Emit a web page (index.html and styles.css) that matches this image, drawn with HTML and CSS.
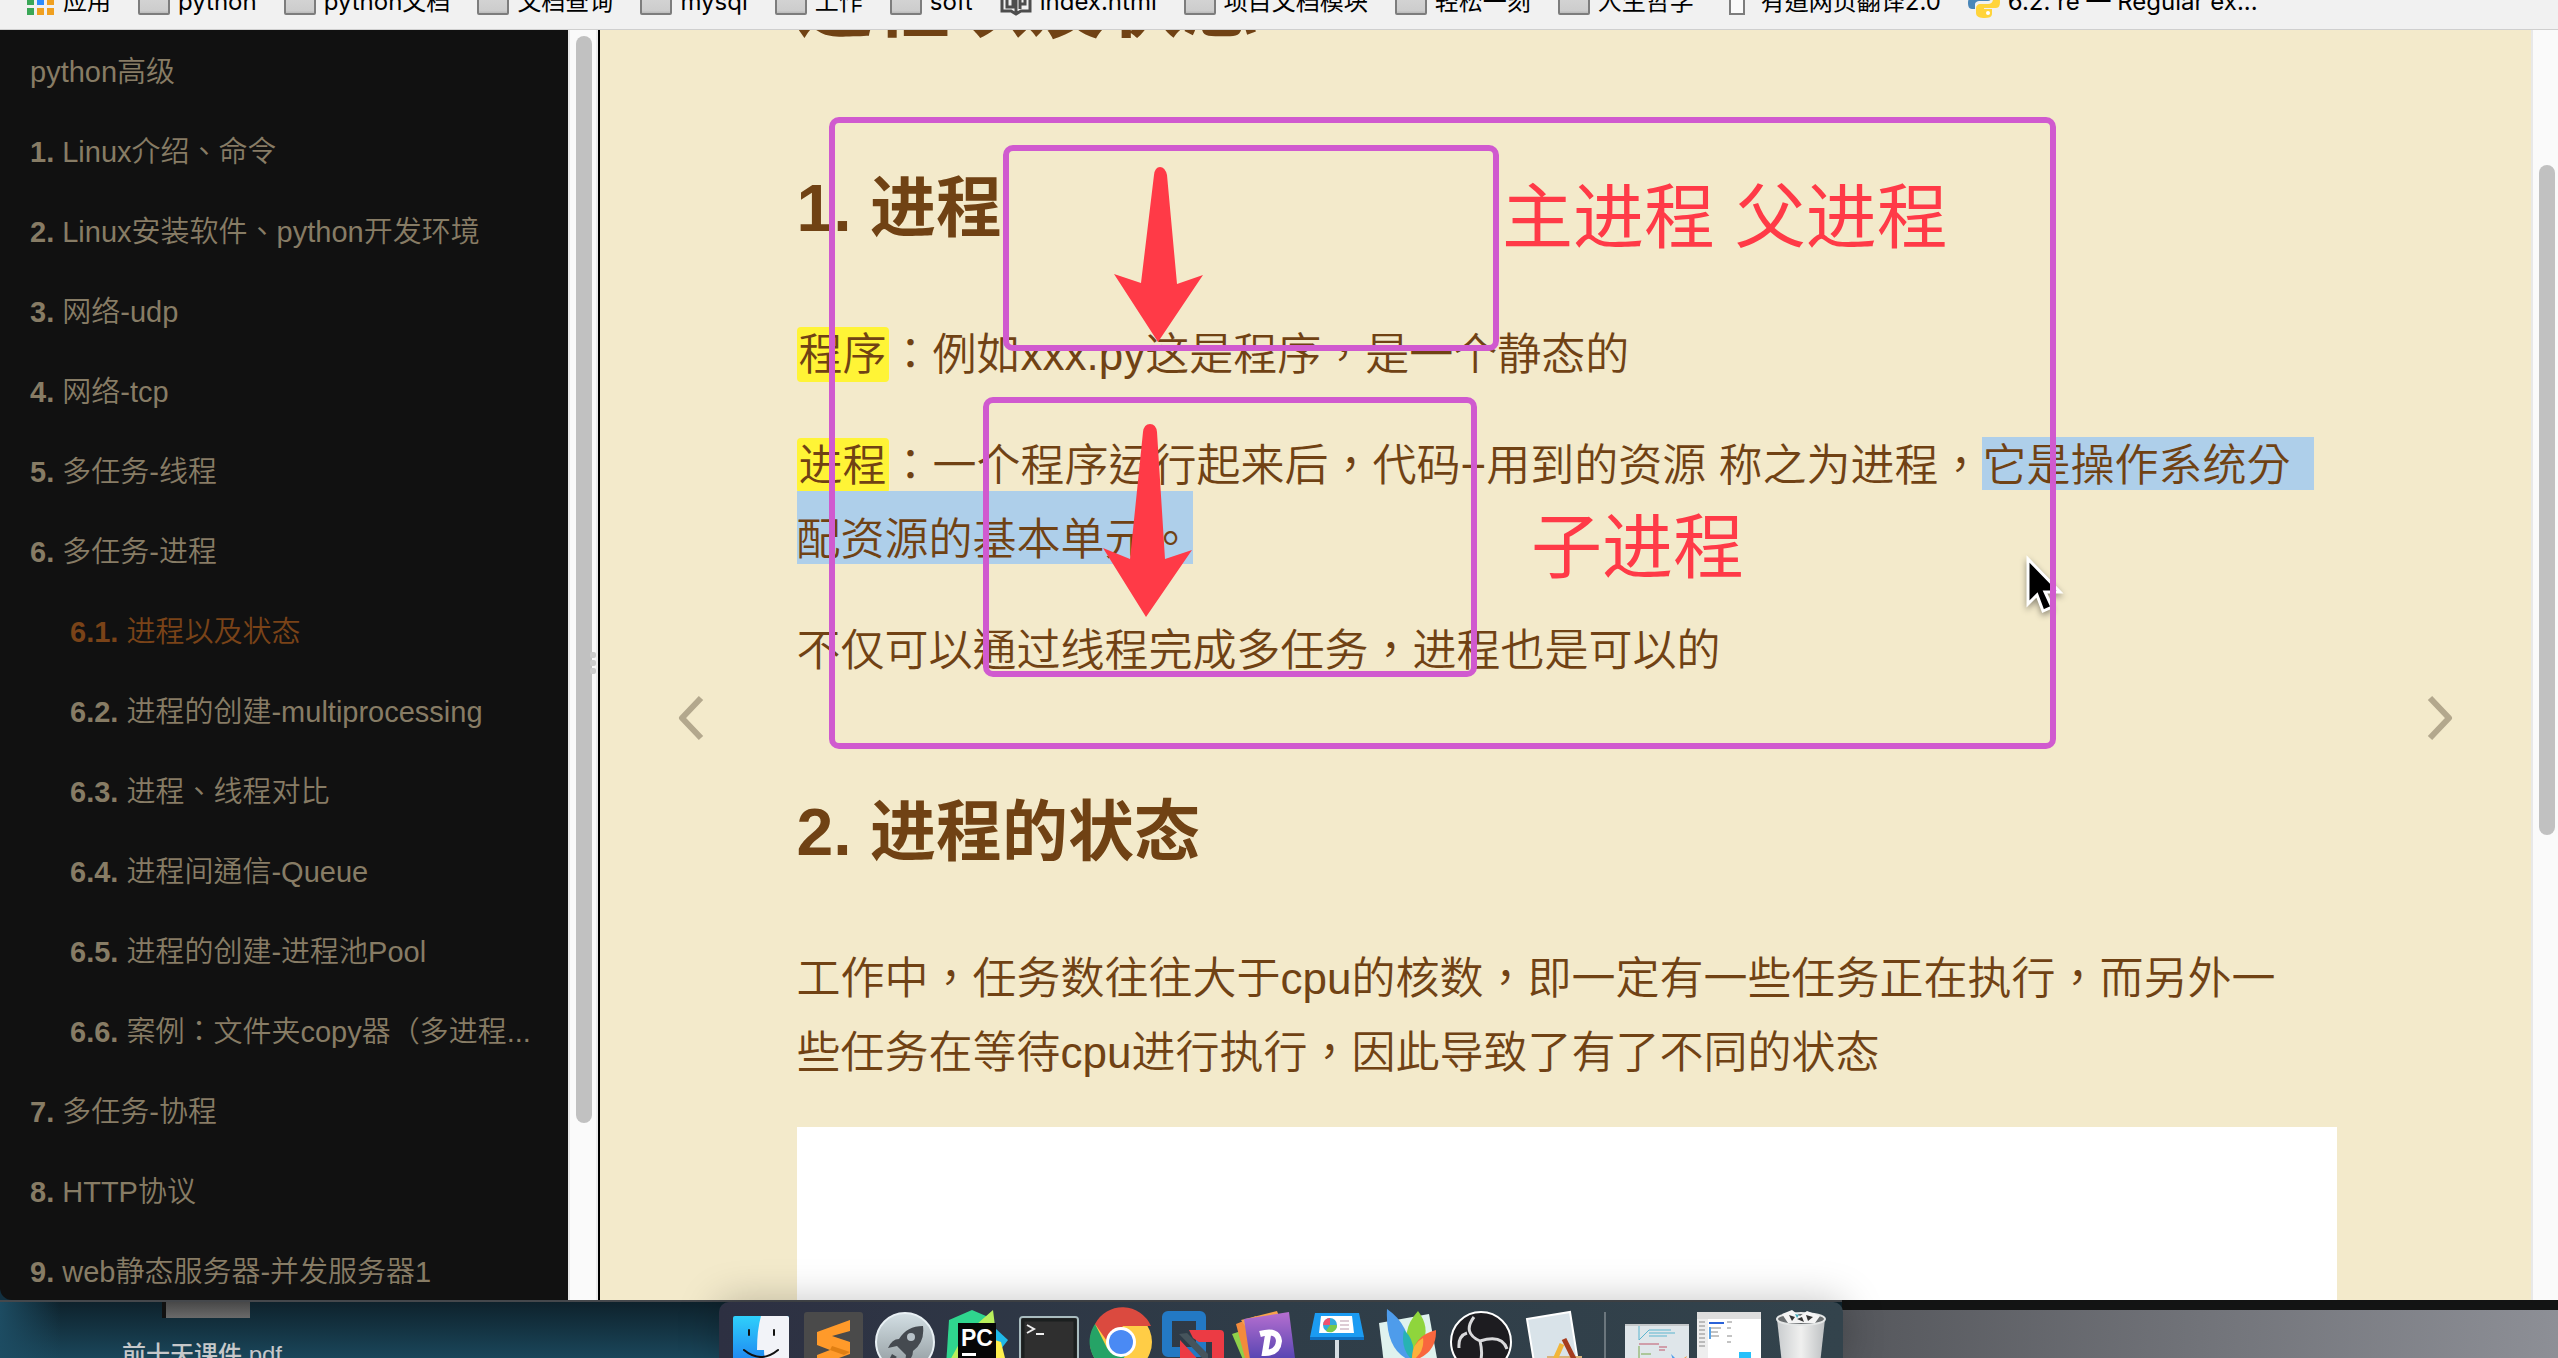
FILE: index.html
```html
<!DOCTYPE html>
<html lang="zh-Hant">
<head>
<meta charset="utf-8">
<title>进程以及状态</title>
<link rel="stylesheet" href="styles.css">
</head>
<body>
<svg class="defs" width="0" height="0" aria-hidden="true">
  <defs>
    <linearGradient id="folderFill" x1="0" y1="0" x2="0" y2="1"><stop offset="0" stop-color="#d8d8d8"/><stop offset=".85" stop-color="#cdcdcd"/><stop offset="1" stop-color="#b4b4b4"/></linearGradient>
    <symbol id="folder" viewBox="0 0 32 26"><rect x="1" y="1" width="30" height="24" rx="1" fill="url(#folderFill)" stroke="#7d7d7d" stroke-width="2"/></symbol>
  </defs>
</svg>
<div class="window">
  <nav class="bookmarks" aria-label="书签">
    <a href="#"><svg class="ico" width="28" height="28" viewBox="0 0 28 28"><g fill="#e8453c"><path d="M0 0h7v7H0z"/></g><g><path fill="#3aa757" d="M0 10h7v7H0zM0 20h7v7H0z"/><path fill="#2d8cff" d="M10 10h7v7h-7z"/><path fill="#f0a020" d="M20 10h7v7h-7zM20 20h7v7h-7zM10 20h7v7h-7z"/></g></svg>应用</a>
    <a href="#"><svg class="ico" width="32" height="26"><use href="#folder"/></svg>python</a>
    <a href="#"><svg class="ico" width="32" height="26"><use href="#folder"/></svg>python文档</a>
    <a href="#"><svg class="ico" width="32" height="26"><use href="#folder"/></svg>文档查询</a>
    <a href="#"><svg class="ico" width="32" height="26"><use href="#folder"/></svg>mysql</a>
    <a href="#"><svg class="ico" width="32" height="26"><use href="#folder"/></svg>工作</a>
    <a href="#"><svg class="ico" width="32" height="26"><use href="#folder"/></svg>soft</a>
    <a href="#"><svg class="ico" width="32" height="28" viewBox="0 0 32 28"><path fill="none" stroke="#4d4d4d" stroke-width="3" d="M2 4v19h9l5 3 5-3h9V4M7 4v15h6V6M16 8v16M20 21V8h5v8h-4"/></svg>index.html</a>
    <a href="#"><svg class="ico" width="32" height="26"><use href="#folder"/></svg>项目文档模块</a>
    <a href="#"><svg class="ico" width="32" height="26"><use href="#folder"/></svg>轻松一刻</a>
    <a href="#"><svg class="ico" width="32" height="26"><use href="#folder"/></svg>人生哲学</a>
    <a href="#"><svg class="ico" width="32" height="26" viewBox="0 0 32 26"><path fill="#fafafa" stroke="#7d7d7d" stroke-width="2" d="M9 1h14v24H9z"/></svg>有道网页翻译2.0</a>
    <a href="#"><svg class="ico" width="32" height="32" viewBox="0 0 32 32"><path fill="#4a86b8" d="M15 0C8 0 8 3 8 5v4h8v1H4c-3 0-4 4-4 7s1 6 4 6h3v-4c0-3 2-4 5-4h8c2 0 4-2 4-4V5c0-4-4-5-9-5z"/><path fill="#ffd43b" d="M17 32c7 0 7-3 7-5v-4h-8v-1h12c3 0 4-3 4-6s-1-7-4-7h-3v4c0 3-2 5-5 5h-8c-2 0-4 2-4 4v5c0 4 4 5 9 5z"/><circle cx="20" cy="27" r="2" fill="#fff"/></svg>6.2. re — Regular ex...</a>
  </nav>
  <div class="book">
    <aside class="sidebar">
      <ul class="toc">
        <li><a href="#">python高级</a></li>
        <li><a href="#"><b>1.</b> Linux介绍、命令</a></li>
        <li><a href="#"><b>2.</b> Linux安装软件、python开发环境</a></li>
        <li><a href="#"><b>3.</b> 网络-udp</a></li>
        <li><a href="#"><b>4.</b> 网络-tcp</a></li>
        <li><a href="#"><b>5.</b> 多任务-线程</a></li>
        <li><a href="#"><b>6.</b> 多任务-进程</a>
          <ul>
            <li><a class="active" href="#"><b>6.1.</b> 进程以及状态</a></li>
            <li><a href="#"><b>6.2.</b> 进程的创建-multiprocessing</a></li>
            <li><a href="#"><b>6.3.</b> 进程、线程对比</a></li>
            <li><a href="#"><b>6.4.</b> 进程间通信-Queue</a></li>
            <li><a href="#"><b>6.5.</b> 进程的创建-进程池Pool</a></li>
            <li><a href="#"><b>6.6.</b> 案例：文件夹copy器（多进程...</a></li>
          </ul>
        </li>
        <li><a href="#"><b>7.</b> 多任务-协程</a></li>
        <li><a href="#"><b>8.</b> HTTP协议</a></li>
        <li><a href="#"><b>9.</b> web静态服务器-并发服务器1</a></li>
      </ul>
      <div class="track track-side"><div class="thumb"></div><div class="grip"><i></i><i></i><i></i></div></div>
    </aside>
    <main class="page">
      <a class="turn" href="#" aria-label="上一页"><svg width="28" height="46" viewBox="0 0 28 46"><path d="M24 3 5 23l19 20"/></svg></a>
      <article class="article">
        <h1>进程以及状态</h1>
        <h2>1. 进程</h2>
        <p><mark>程序</mark>：例如xxx.py这是程序，是一个静态的</p>
        <p><mark>进程</mark>：一个程序运行起来后，代码+用到的资源 称之为进程，<span class="sel-first">它是操作系统分</span><br><span class="sel-rest">配资源的基本单元。</span></p>
        <p>不仅可以通过线程完成多任务，进程也是可以的</p>
        <h2 class="next">2. 进程的状态</h2>
        <p>工作中，任务数往往大于cpu的核数，即一定有一些任务正在执行，而另外一<br>些任务在等待cpu进行执行，因此导致了有了不同的状态</p>
        <div class="figure"></div>
      </article>
      <a class="turn" href="#" aria-label="下一页"><svg width="28" height="46" viewBox="0 0 28 46"><path d="m4 3 19 20L4 43"/></svg></a>
    </main>
    <div class="track track-page"><div class="thumb"></div></div>
  </div>
</div>

<div class="notes">
  <svg class="cursor" width="44" height="64" viewBox="0 0 44 64"><path d="M3 4v45l9-9 6 16 9-4-7-15h15z" fill="#000" stroke="#fff" stroke-width="3"/></svg>
  <div class="box box-outer"></div>
  <div class="box box-parent"></div>
  <div class="box box-child"></div>
  <svg class="arrow arrow-a" width="90" height="176" viewBox="0 0 90 176"><path d="M40 8q1-8 6-8t7 8l10 109 26-9-45 67L0 107l27 9z"/></svg>
  <svg class="arrow arrow-b" width="90" height="194" viewBox="0 0 90 194"><path d="M40 8q1-8 7-8t7 8l8 127 27-9-46 67L0 124l27 11z"/></svg>
  <span class="label label-parent">主进程 父进程</span>
  <span class="label label-child">子进程</span>
</div>

<footer class="desktop">
  <div class="file"><div class="file-thumb"></div><span>前十天课件.pdf</span></div>
  <div class="dock">
    <svg width="72" height="56" viewBox="0 0 72 56"><defs><linearGradient id="fb" x1="0" y1="0" x2="0" y2="1"><stop offset="0" stop-color="#2fd0fb"/><stop offset="1" stop-color="#1d7ff0"/></linearGradient></defs><rect x="8" y="14" width="56" height="50" rx="2" fill="url(#fb)"/><path fill="#f2f3f8" d="M36 14h26a2 2 0 0 1 2 2v42H40q-1-6-1-10h-7q0-20 4-34z"/><path stroke="#111" stroke-width="2" fill="none" stroke-linecap="round" d="M24 28v5M49 28v5M19 48q17 14 34 0"/></svg>
    <svg width="72" height="56" viewBox="0 0 72 56"><rect x="7" y="10" width="59" height="50" rx="3" fill="#4a4a4a"/><path fill="#ff9a2a" d="M53 18v11L35 34l18 6v12L20 64V53l13-5-13-5V30z"/><path fill="#e07f12" d="m35 44 18 6-6 3-14-5z"/></svg>
    <svg width="72" height="56" viewBox="0 0 72 56"><defs><linearGradient id="lb" x1="0" y1="0" x2="0" y2="1"><stop offset="0" stop-color="#d3dfe4"/><stop offset="1" stop-color="#8f989c"/></linearGradient></defs><circle cx="36" cy="40" r="29" fill="url(#lb)" stroke="#e8f0f4" stroke-width="2"/><path fill="#454a50" d="M54 24q-16 0-24 13-7 0-11 9l9-2 9 9-1 8q8-4 8-12 12-9 10-25zM23 52l-5 10 10-7z"/><circle cx="42" cy="35" r="4" fill="#b8c2c8"/></svg>
    <svg width="72" height="56" viewBox="0 0 72 56"><path fill="#2fd58e" d="M8 18 31 8l14 6v50H5z"/><path fill="#b9ef5c" d="m36 22 16-14 2 16zM8 60l10-18v22H8z"/><path fill="#1fb9e8" d="m54 26 13 12-7 9-6-4z"/><path fill="#fff04d" d="m54 38 6 2 6 24H50z"/><rect x="17" y="21" width="38" height="40" fill="#060606"/><text x="20" y="44" class="pc">PC</text><path fill="#fff" d="M21 51h14v3H21z"/></svg>
    <svg width="72" height="56" viewBox="0 0 72 56"><rect x="7" y="15" width="58" height="50" rx="3" fill="#2f2f2f" stroke="#a9bcbf" stroke-width="2"/><path fill="none" stroke="#1b1f1f" stroke-width="3" d="M10 60V18h52v42"/><path fill="none" stroke="#eee" stroke-width="2" d="m14 23 7 4-7 4M23 32h8"/></svg>
    <svg width="72" height="56" viewBox="0 0 72 56"><circle cx="36" cy="40" r="31" fill="#ffcd46"/><path fill="#db4a3f" d="M10 22a31 31 0 0 1 56 2H38L24 42z"/><path fill="#25a366" d="M10 22a31 31 0 0 0 20 48l10-16-18-8z"/><circle cx="36" cy="40" r="15" fill="#fff"/><circle cx="36" cy="40" r="12" fill="#4a8af4"/></svg>
    <svg width="72" height="56" viewBox="0 0 72 56"><rect x="10" y="14" width="34" height="36" rx="1" fill="none" stroke="#2379c4" stroke-width="10"/><path fill="#ec3b44" d="M32 28h31q4 0 4 4v32H55V40H42l-6-4zM23 38l24 26H23z"/><path fill="#46545c" d="m22 32 8-1 21 21v10z"/></svg>
    <svg width="72" height="56" viewBox="0 0 72 56"><defs><linearGradient id="da" x1="0" y1="0" x2="0" y2="1"><stop offset="0" stop-color="#b66fd0"/><stop offset="1" stop-color="#4a3fae"/></linearGradient></defs><path fill="#8fd14a" d="m3 32 12-4 8 32h-8z"/><path fill="#f38b3c" d="m7 22 20-8 8 46H17z"/><path fill="#f6a24c" d="m12 18 36-9 4 10-34 8z"/><path fill="url(#da)" d="m15 17 45-7 7 54H22z"/><path fill="none" stroke="#fff" stroke-width="6" d="M31 32q18-5 19 7-1 12-14 12l3-18"/></svg>
    <svg width="72" height="56" viewBox="0 0 72 56"><path fill="#d6dde2" d="M34 35h4v25h-4z"/><path fill="#1b9bf2" d="M14 11h44l5 24v3H9v-3z"/><path fill="#0f6fc0" d="M9 35h54v3H9z"/><path fill="#fff" d="M20 14h31l2 17H18z"/><circle cx="29" cy="23" r="7" fill="#34aadc"/><path fill="#f0506e" d="M29 23v-7a7 7 0 0 0-7 7z"/><path fill="#79c94b" d="M29 23h7a7 7 0 0 1-11 6z"/><path stroke="#b9a" d="M39 19h9M39 23h9M39 27h9"/></svg>
    <svg width="72" height="56" viewBox="0 0 72 56"><path fill="#dff2ee" d="m6 21 50-9 9 50H11z"/><path fill="#4e9ceb" d="M14 7q24 16 25 52Q12 50 14 7z"/><path fill="#8fd53c" d="M45 9q12 16 5 31L38 54q-12-24 7-45z"/><path fill="#27b3b3" d="M31 28q13 12 8 30-12-12-8-30z"/><path fill="#f9673e" d="M63 28q1 24-24 31 0-25 24-31z"/><path fill="#fbb13c" d="M50 36q2 14-11 23-1-17 11-23z"/></svg>
    <svg width="72" height="56" viewBox="0 0 72 56"><circle cx="36" cy="40" r="30" fill="#1d1c20" stroke="#fff" stroke-width="2"/><path fill="none" stroke="#d9d9db" stroke-width="3" d="M29 15q-12 16 6 24 22-7 27 8M35 39q4 16-2 26M14 46q-1-12 8-15"/></svg>
    <svg width="72" height="56" viewBox="0 0 72 56"><path fill="#d9e3e9" stroke="#fff" stroke-width="2" d="m10 17 43-7 8 50H17z"/><path fill="#d9b27a" d="M30 54h35v4H30z"/><path stroke="#f2b63a" stroke-width="5" d="m45 42-8 18"/><path stroke="#a63c1e" stroke-width="5" d="m47 37 12 24"/></svg>
    <span class="dock-sep"></span>
    <svg width="72" height="56" viewBox="0 0 72 56"><rect x="4" y="22" width="64" height="40" fill="#dfe6ea"/><rect x="4" y="22" width="64" height="2" fill="#c4c8ca"/><path fill="none" stroke="#5bb5cf" d="M18 24v14l10-10h22M28 31h26M28 34h18"/><path fill="none" stroke="#c0576a" d="M18 42h20M38 45h8M38 48h6"/><path fill="none" stroke="#7aa84a" d="M18 44v16M20 52h10"/><path fill="#4e9ceb" d="m50 52 6 6h-4z"/><path fill="#f59b3c" d="m66 54-6 4h4z"/></svg>
    <svg width="72" height="56" viewBox="0 0 72 56"><rect x="4" y="10" width="64" height="50" fill="#fff"/><rect x="4" y="10" width="64" height="7" fill="#ddd"/><rect x="4" y="17" width="11" height="40" fill="#eee"/><path stroke="#888" d="M6 20h6M6 24h6M6 28h6M6 32h6M6 36h6M6 40h6M6 44h6M18 26h10M18 30h7M18 34h8M34 20h5M34 26h4M34 34h5M34 40h4"/><path stroke="#2a62d8" stroke-width="2" d="M16 21h15"/><path stroke="#5ba3e6" stroke-width="2" d="M17 25v12"/><path fill="#27c0fa" d="M46 50h12v6H46z"/></svg>
    <svg width="72" height="56" viewBox="0 0 72 56"><defs><linearGradient id="tr" x1="0" y1="0" x2="1" y2="0"><stop offset="0" stop-color="#c9ccce"/><stop offset=".5" stop-color="#f0f0ef"/><stop offset="1" stop-color="#bdc0c2"/></linearGradient></defs><path fill="url(#tr)" d="M12 17h48l-5 45H17z"/><ellipse cx="36" cy="17" rx="24" ry="6" fill="#6a6e70" stroke="#e4e6e6" stroke-width="2"/><path fill="#f4f4f4" d="m17 12 10-4 8 6 7-5 13 5-5 7H23z"/><path fill="#333" d="m24 13 6 2-3 4zM41 13l7 2-5 4zM32 17l5-2 2 5z"/><path fill="#4ab" d="m30 12 4 1-2 3z"/></svg>
  </div>
</footer>
</body>
</html>
```
FILE: styles.css
```css
* { box-sizing: border-box; }

body {
  margin: 0;
  height: 100vh;
  display: flex;
  flex-direction: column;
  overflow: hidden;
  position: relative;
  background: #123040;
  font-family: "Liberation Sans", "Noto Sans CJK TC", sans-serif;
}

a { color: inherit; text-decoration: none; }
ul { list-style: none; margin: 0; padding: 0; }
.defs { position: absolute; }

/* browser window */
.window {
  flex: 1;
  min-height: 0;
  display: flex;
  flex-direction: column;
  overflow: hidden;
  border-radius: 0 0 0 12px;
  z-index: 1;
}

.bookmarks {
  flex: none;
  height: 30px;
  display: flex;
  align-items: flex-start;
  gap: 27px;
  padding-left: 27px;
  overflow: hidden;
  background: #f1f1f1;
  border-bottom: 1px solid #cfcfcf;
  color: #000;
  font: 24px/32px Inter, "Noto Sans CJK SC", sans-serif;
  white-space: nowrap;
}
.bookmarks a {
  display: flex;
  align-items: center;
  gap: 8px;
  margin-top: -14px;
}
.ico { flex: none; }

.book { flex: 1; min-height: 0; display: flex; }

/* table of contents */
.sidebar {
  flex: none;
  width: 600px;
  display: flex;
  overflow: hidden;
  background: #111;
  border-right: 2px solid #000;
}
.toc {
  flex: 1;
  min-width: 0;
  padding-top: 2px;
  color: #877c65;
  font-size: 29px;
  font-weight: 350;
  line-height: 80px;
  white-space: nowrap;
}
.toc b { font-weight: 700; }
.toc a { display: block; padding-left: 30px; overflow: hidden; text-overflow: ellipsis; }
.toc ul a { padding-left: 70px; }
.toc .active { color: #7a4318; }

.track { flex: none; background: #fafafa; border-left: 2px solid #e8e8e8; }
.thumb { width: 16px; border-radius: 8px; background: #c1c1c1; }
.track-side { width: 30px; padding: 6px 6px 0; position: relative; border-right: 2px solid #ececec; }
.track-side .thumb { height: 86%; }
.track-page { width: 27px; padding: 135px 0 0 6px; }
.track-page .thumb { height: 59%; }
.grip {
  position: absolute;
  right: 0;
  top: 49%;
  display: flex;
  flex-direction: column;
  gap: 2px;
}
.grip i { width: 6px; height: 6px; border-radius: 2px; background: #ccc; }

/* article */
.page {
  flex: 1;
  min-width: 0;
  display: flex;
  justify-content: center;
  overflow: hidden;
  background: #f3eacb;
  color: #704214;
}
.turn {
  flex: 1;
  display: flex;
  justify-content: center;
  padding-top: 665px;
}
.turn:first-child { padding-right: 14px; }
.turn:last-child { padding-left: 12px; }
.turn path {
  fill: none;
  stroke: #b3a88d;
  stroke-width: 6;
  stroke-linejoin: round;
}
.article {
  flex: 0 1 1540px;
  margin-top: -72px;
  font-size: 44px;
  font-weight: 350;
  line-height: 74px;
  white-space: nowrap;
}
h1, h2, p { margin: 0; }
h1 { font-size: 77px; line-height: 92px; font-weight: 700; margin-bottom: 118px; }
h2 { font-size: 66px; line-height: 80px; font-weight: 700; margin-bottom: 70px; }
p { margin-bottom: 37px; }
.next { margin-top: 104px; }
mark { padding: 3px 2px; border-radius: 4px; background: #fff436; color: inherit; }
.sel-first { padding: 4px 24px 0 0; background: #aecfea; }
.sel-rest { padding-top: 24px; background: #aecfea; }
.figure { height: 400px; background: #fff; }

/* screen annotations */
.notes { position: absolute; inset: 0; z-index: 2; pointer-events: none; }
.notes > * { position: absolute; }
.box { border: 6px solid #d05acf; border-radius: 10px; }
.box-outer { left: 829px; top: 117px; width: 1227px; height: 632px; }
.box-parent { left: 1003px; top: 145px; width: 496px; height: 206px; }
.box-child { left: 983px; top: 397px; width: 494px; height: 280px; }
.arrow { fill: #ff3a47; }
.arrow-a { left: 1114px; top: 167px; }
.arrow-b { left: 1103px; top: 424px; }
.label { color: #ff3a47; font-size: 71px; line-height: 80px; font-weight: 400; white-space: nowrap; }
.label-parent { left: 1502px; top: 178px; }
.label-child { left: 1531px; top: 508px; }
.cursor { left: 2025px; top: 555px; filter: drop-shadow(0 3px 3px rgba(0, 0, 0, .4)); }

/* desktop and dock */
.desktop {
  flex: none;
  height: 58px;
  display: flex;
  justify-content: center;
  position: relative;
  padding-left: 3px;
  border-top: 2px solid #45484c;
  background: linear-gradient(90deg, #1d4c62 0, rgba(29, 76, 98, 0) 60px), linear-gradient(#0e222c, #1a465a);
}
.desktop::after {
  content: "";
  position: absolute;
  right: 0;
  top: -2px;
  width: 28%;
  height: 56px;
  border-top: 10px solid #131414;
  background: linear-gradient(90deg, #55575c, #8d8f96);
}
.file {
  position: absolute;
  left: 122px;
  top: 0;
  color: #c6c8ca;
  font: 500 24px/32px "Liberation Sans", "Noto Sans CJK SC", sans-serif;
}
.file-thumb {
  width: 88px;
  height: 16px;
  margin: 0 0 21px 40px;
  background: linear-gradient(#484848, #6a6a6a);
  border-left: 4px solid #111;
}
.dock {
  display: flex;
  align-items: flex-start;
  padding: 0 6px;
  border-radius: 10px 10px 0 0;
  background: linear-gradient(90deg, #2d3042, #2f3d48 50%, #33434c);
  box-shadow: 0 0 40px rgba(0, 0, 0, .25);
  position: relative;
  z-index: 3;
}
.dock-sep { width: 2px; height: 50px; margin: 10px 15px 0; background: #6b767d; }
.pc { fill: #fff; font: 700 23px "Liberation Sans", sans-serif; }
```
